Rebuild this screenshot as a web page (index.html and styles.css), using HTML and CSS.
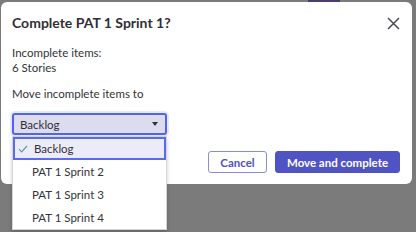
FILE: index.html
```html
<html>
<head>
  <meta charset="utf-8">
  <title>Complete sprint</title>
  <link rel="stylesheet" href="styles.css">
</head>
<body>
  <div class="backdrop-strip"></div>
  <div class="dialog">
    <div class="dialog-header">
      <h2>Complete PAT 1 Sprint 1?</h2>
      <button class="close-btn" aria-label="Close">
        <svg width="13" height="13" viewBox="0 0 13 13">
          <path d="M1 1 L12 12 M12 1 L1 12" stroke="#4a4a55" stroke-width="1.5" fill="none"/>
        </svg>
      </button>
    </div>

    <div class="summary">
      <div>Incomplete items:</div>
      <div>6 Stories</div>
    </div>

    <label class="field-label">Move incomplete items to</label>

    <div class="select-wrap">
      <div class="select">
        <span>Backlog</span>
        <span class="caret"></span>
      </div>
      <ul class="options">
        <li class="option selected">
          <svg class="check" width="10" height="8" viewBox="0 0 10 8">
            <path d="M1 4.2 L3.6 6.8 L9 1" stroke="#5f9e8c" stroke-width="1.2" fill="none"/>
          </svg>
          Backlog
        </li>
        <li class="option">PAT 1 Sprint 2</li>
        <li class="option">PAT 1 Sprint 3</li>
        <li class="option">PAT 1 Sprint 4</li>
      </ul>
    </div>

    <div class="dialog-footer">
      <button class="btn btn-secondary">Cancel</button>
      <button class="btn btn-primary">Move and complete</button>
    </div>
  </div>
</body>
</html>
```

FILE: styles.css
```css
body {
  margin: 0;
  padding: 2px 0 0 1px;
  width: 416px;
  height: 232px;
  box-sizing: border-box;
  overflow: hidden;
  background: #7b7b7b;
  font-family: Lato, 'Liberation Sans', sans-serif;
  color: #333339;
  position: relative;
}
.backdrop-strip {
  position: absolute;
  top: 0;
  left: 308px;
  width: 32px;
  height: 2px;
  background: #4a3d6e;
}
.dialog {
  width: 411px;
  height: 182px;
  box-sizing: border-box;
  background: white;
  border-radius: 6px;
  padding: 11px 12px 11px 11px;
  display: flex;
  flex-direction: column;
  position: relative;
}
.dialog-header {
  display: flex;
  justify-content: space-between;
  align-items: center;
  height: 20px;
}
.dialog-header h2 {
  margin: 0;
  font-size: 14px;
  font-weight: 700;
  line-height: 20px;
  color: #2f2f36;
}
.close-btn {
  border: none;
  background: none;
  padding: 0;
  width: 13px;
  height: 13px;
  display: flex;
}
.summary {
  margin-top: 12px;
  font-size: 11.5px;
  line-height: 15px;
}
.field-label {
  display: block;
  margin-top: 11px;
  font-size: 11.5px;
  line-height: 15px;
}
.select-wrap {
  position: relative;
  margin-top: 12px;
  width: 155px;
}
.select {
  height: 22px;
  box-sizing: border-box;
  border: 2px solid #5265e6;
  border-radius: 3px;
  background: #dcdcee;
  box-shadow: 0 0 0 2px rgba(82, 101, 230, 0.15);
  display: flex;
  align-items: center;
  justify-content: space-between;
  padding: 0 7px 0 6px;
  font-size: 11.5px;
  color: #2f2f36;
}
.caret {
  width: 0;
  height: 0;
  border-left: 3.5px solid transparent;
  border-right: 3.5px solid transparent;
  border-top: 4px solid #2f2f36;
}
.options {
  position: absolute;
  top: 23px;
  left: 0;
  width: 155px;
  margin: 0;
  padding: 0;
  list-style: none;
  background: white;
  border: 1px solid #d4d4dc;
  box-sizing: border-box;
  box-shadow: 0 2px 4px rgba(0, 0, 0, 0.2);
  z-index: 2;
}
.option {
  height: 23px;
  box-sizing: border-box;
  display: flex;
  align-items: center;
  padding-left: 19px;
  font-size: 11.5px;
  color: #333339;
}
.option.selected {
  padding-left: 3px;
  background: #ececf8;
  border: 2px solid #5a6ce8;
}
.check {
  margin-right: 6px;
}
.dialog-footer {
  margin-top: auto;
  display: flex;
  justify-content: flex-end;
  gap: 8px;
}
.btn {
  height: 22px;
  border-radius: 3px;
  font-family: inherit;
  font-size: 11.5px;
  font-weight: 700;
  padding: 0;
  white-space: nowrap;
  cursor: pointer;
}
.btn-secondary {
  width: 59px;
  background: white;
  border: 1px solid #8b8bd8;
  color: #4f52c2;
}
.btn-primary {
  width: 125px;
  background: #5053c4;
  border: 1px solid #5053c4;
  color: white;
}
```
